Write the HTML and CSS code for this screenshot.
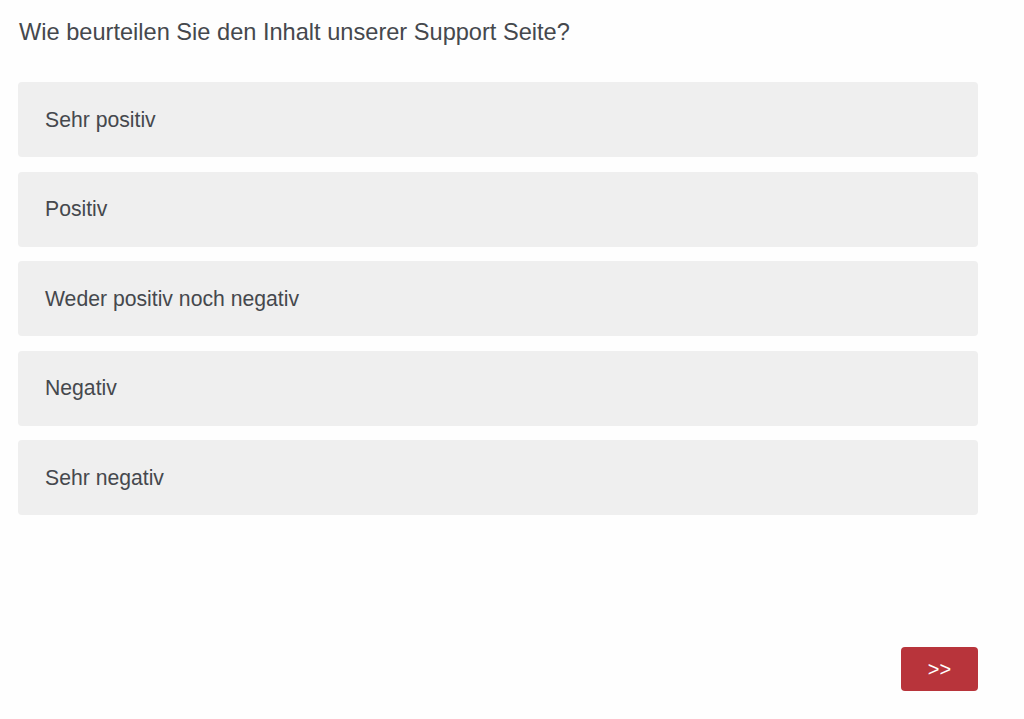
FILE: index.html
```html
<!DOCTYPE html>
<html lang="de">
<head>
<meta charset="utf-8">
<title>Umfrage</title>
<link rel="stylesheet" href="styles.css">
</head>
<body>
<div class="survey">
  <h1 class="question">Wie beurteilen Sie den Inhalt unserer Support Seite?</h1>
  <div class="options">
    <div class="option">Sehr positiv</div>
    <div class="option">Positiv</div>
    <div class="option">Weder positiv noch negativ</div>
    <div class="option">Negativ</div>
    <div class="option">Sehr negativ</div>
  </div>
  <div class="actions">
    <button class="next">&gt;&gt;</button>
  </div>
</div>
</body>
</html>
```
FILE: styles.css
```css
html, body {
  margin: 0;
  padding: 0;
  background: #fefefe;
}
body {
  font-family: "Liberation Sans", Arial, sans-serif;
  color: #464a4f;
}
.survey {
  width: 960px;
  padding: 18px 0 0 18px;
}
.question {
  margin: 0 0 0 1px;
  font-size: 23.6px;
  font-weight: normal;
  line-height: 28px;
  color: #45484d;
}
.options {
  margin-top: 36px;
  display: flex;
  flex-direction: column;
  gap: 14.5px;
}
.option {
  height: 75px;
  display: flex;
  align-items: center;
  padding-left: 27px;
  background: #efefef;
  border-radius: 4px;
  font-size: 21.2px;
  color: #45484d;
}
.actions {
  display: flex;
  justify-content: flex-end;
  margin-top: 132px;
}
.next {
  width: 77px;
  height: 44px;
  border: none;
  border-radius: 4px;
  background: #b8343b;
  color: #fff;
  font-family: "Liberation Sans", Arial, sans-serif;
  font-size: 20px;
  padding: 0;
}
```
